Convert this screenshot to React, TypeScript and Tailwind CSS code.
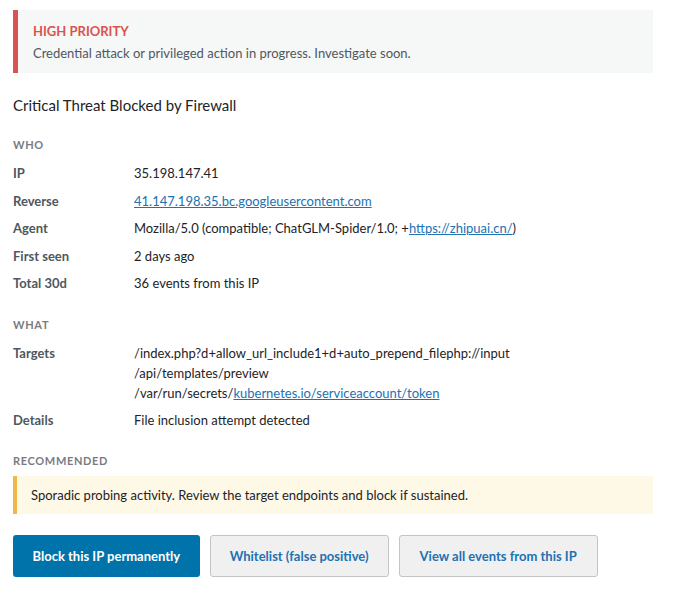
const who = [
  { label: 'IP', value: <>35.198.147.41</> },
  {
    label: 'Reverse',
    value: (
      <a href="#" className="text-[#2271b1] underline">
        41.147.198.35.bc.googleusercontent.com
      </a>
    ),
  },
  {
    label: 'Agent',
    value: (
      <>
        Mozilla/5.0 (compatible; ChatGLM-Spider/1.0; +
        <a href="#" className="text-[#2271b1] underline">
          https://zhipuai.cn/
        </a>
        )
      </>
    ),
  },
  { label: 'First seen', value: <>2 days ago</> },
  { label: 'Total 30d', value: <>36 events from this IP</> },
];

function SectionHead({ children }: { children: string }) {
  return (
    <div className="text-[11px] font-bold uppercase tracking-[0.06em] text-[#787c82]">
      {children}
    </div>
  );
}

function Row({ label, children }: { label: string; children: React.ReactNode }) {
  return (
    <div className="flex">
      <div className="w-[121px] shrink-0 font-bold text-[#50575e]">{label}</div>
      <div className="text-[#1d2327]">{children}</div>
    </div>
  );
}

export default function App() {
  return (
    <div
      className="bg-white min-h-[597px] pl-[13px] pr-[31px] pt-[10px] text-[13px] leading-5 text-[#1d2327]"
      style={{ fontFamily: 'Lato, "Noto Sans", sans-serif' }}
    >
      {/* Priority banner */}
      <div className="border-l-[5px] border-[#d9534f] bg-[#f6f7f7] pl-[15px] pt-[11px] pb-[10px]">
        <div className="text-[13px] font-bold text-[#d9534f] leading-5">HIGH PRIORITY</div>
        <div className="mt-[2px] text-[#50575e]">
          Credential attack or privileged action in progress. Investigate soon.
        </div>
      </div>

      <h2 className="mt-[22px] text-[15px] leading-5 text-[#1d2327]">
        Critical Threat Blocked by Firewall
      </h2>

      <div className="mt-[20px]">
        <SectionHead>Who</SectionHead>
        <div className="mt-[8px] flex flex-col gap-[7.5px]">
          {who.map((r) => (
            <Row key={r.label} label={r.label}>
              {r.value}
            </Row>
          ))}
        </div>
      </div>

      <div className="mt-[22px]">
        <SectionHead>What</SectionHead>
        <div className="mt-[8px] flex flex-col gap-[7px]">
          <Row label="Targets">
            <div>/index.php?d+allow_url_include1+d+auto_prepend_filephp://input</div>
            <div>/api/templates/preview</div>
            <div>
              /var/run/secrets/
              <a href="#" className="text-[#2271b1] underline">
                kubernetes.io/serviceaccount/token
              </a>
            </div>
          </Row>
          <Row label="Details">File inclusion attempt detected</Row>
        </div>
      </div>

      <div className="mt-[21px]">
        <SectionHead>Recommended</SectionHead>
        <div className="mt-[5px] border-l-4 border-[#f0b849] bg-[#fef8e7] pl-[14px] py-[9px] text-[#1d2327]">
          Sporadic probing activity. Review the target endpoints and block if sustained.
        </div>
      </div>

      <div className="mt-[21px] flex gap-[10px]">
        <button className="h-[42px] rounded-[3px] bg-[#0073aa] px-[19.5px] font-bold text-white">
          Block this IP permanently
        </button>
        <button className="h-[42px] rounded-[3px] border border-[#c3c4c7] bg-[#f0f0f1] px-[19px] font-bold text-[#2271b1]">
          Whitelist (false positive)
        </button>
        <button className="h-[42px] rounded-[3px] border border-[#c3c4c7] bg-[#f0f0f1] px-[20px] font-bold text-[#2271b1]">
          View all events from this IP
        </button>
      </div>
    </div>
  );
}
